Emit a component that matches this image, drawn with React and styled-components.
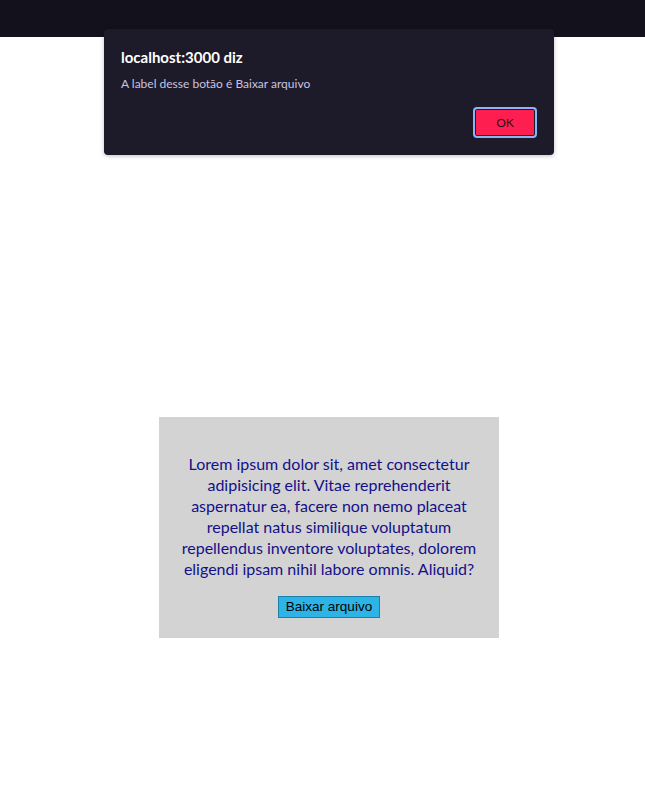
import React from "react";
import styled, { createGlobalStyle } from "styled-components";

const GlobalStyle = createGlobalStyle`
  html, body {
    margin: 0;
    padding: 0;
    background: #ffffff;
  }
  body {
    font-family: "Lato", "Noto Sans", sans-serif;
  }
`;

export default function App() {
  const label = "Baixar arquivo";

  return (
    <>
      <GlobalStyle />
      <TopBar />
      <Dialog>
        <DialogTitle>localhost:3000 diz</DialogTitle>
        <DialogMessage>A label desse botão é {label}</DialogMessage>
        <DialogActions>
          <OkButton>OK</OkButton>
        </DialogActions>
      </Dialog>
      <Page>
        <Card>
          <Text>
            Lorem ipsum dolor sit, amet consectetur adipisicing elit. Vitae
            reprehenderit aspernatur ea, facere non nemo placeat repellat natus
            similique voluptatum repellendus inventore voluptates, dolorem
            eligendi ipsam nihil labore omnis. Aliquid?
          </Text>
          <DownloadButton>{label}</DownloadButton>
        </Card>
      </Page>
    </>
  );
}

const TopBar = styled.div`
  height: 37px;
  background: #13111c;
`;

const Dialog = styled.div`
  position: absolute;
  top: 29px;
  left: 104px;
  width: 450px;
  height: 126px;
  box-sizing: border-box;
  padding: 18px 17px 17px;
  background: #1d1a29;
  border-radius: 4px;
  box-shadow: 0 1px 4px rgba(0, 0, 0, 0.25);
  display: flex;
  flex-direction: column;
`;

const DialogTitle = styled.div`
  font-family: "Lato", "Noto Sans", sans-serif;
  font-weight: 700;
  font-size: 15px;
  color: #ffffff;
  line-height: 20px;
`;

const DialogMessage = styled.div`
  margin-top: 9px;
  font-family: "Lato", "Noto Sans", sans-serif;
  font-size: 12px;
  color: #c9c4e0;
  line-height: 16px;
`;

const DialogActions = styled.div`
  margin-top: auto;
  display: flex;
  justify-content: flex-end;
`;

const OkButton = styled.button`
  width: 64px;
  height: 31px;
  box-sizing: border-box;
  background: #ff1e50;
  border: 2px solid #8ab4f8;
  border-radius: 4px;
  box-shadow: inset 0 0 0 1px #1d1a29;
  color: #2a1020;
  font-family: "Lato", "Noto Sans", sans-serif;
  font-size: 12px;
`;

const Page = styled.main`
  display: flex;
  justify-content: center;
  padding: 380px 0 0 13px;
`;

const Card = styled.section`
  width: 340px;
  box-sizing: border-box;
  padding: 20px;
  background: #d3d3d3;
  text-align: center;
`;

const Text = styled.p`
  margin: 16px 0;
  font-family: "Lato", "Noto Sans", sans-serif;
  font-size: 16px;
  line-height: 21px;
  color: #14108a;
`;

const DownloadButton = styled.button`
  height: 22px;
  padding: 1px 7px;
  font-family: "Liberation Sans", Arial, sans-serif;
  font-size: 13.5px;
  color: #000000;
  background: #2db3e5;
  border: 1px solid #1b7fa8;
  border-radius: 0;
`;
